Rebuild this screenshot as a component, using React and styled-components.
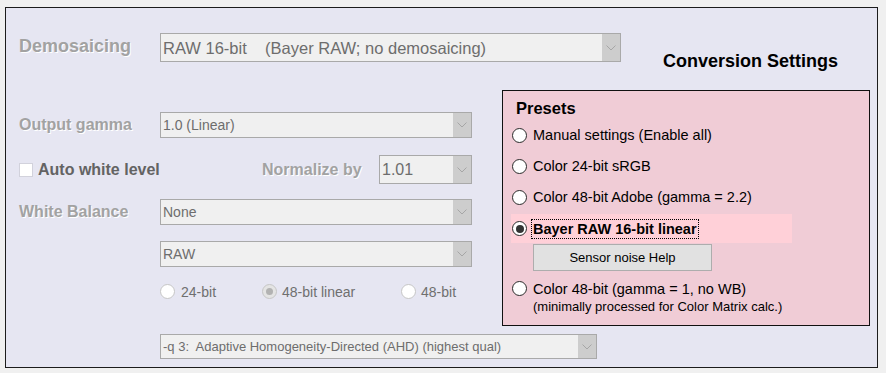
import React from "react";
import styled, { createGlobalStyle } from "styled-components";

const Global = createGlobalStyle`
  html, body { margin: 0; padding: 0; background: #f0f0f0; }
  body { font-family: "Liberation Sans", Arial, sans-serif; }
  #root { display: block; }
`;

const Frame = styled.div`
  box-sizing: border-box;
  margin: 7px 0 0 5px;
  width: 873px;
  height: 361px;
  border: 1px solid #1c1c1c;
  background: #e6e6f2;
  padding: 25px 0 0 13px;
  display: flex;
  flex-direction: column;
`;

const TopRow = styled.div`
  display: flex;
  align-items: flex-start;
  height: 39px;
`;

const FieldLabel = styled.div`
  flex: 0 0 ${(p) => p.$width || 141}px;
  font-size: ${(p) => p.$size || 16}px;
  font-weight: bold;
  color: #a2a2a2;
  text-shadow: 1px 1px 0 #ffffff;
  white-space: nowrap;
  margin-top: ${(p) => p.$top || 0}px;
`;

const Title = styled.div`
  margin: 19.3px 0 0 42px;
  font-size: 18px;
  line-height: 19.5px;
  font-weight: bold;
  color: #000;
  white-space: nowrap;
`;

const SelectBox = styled.div`
  box-sizing: border-box;
  display: flex;
  width: ${(p) => p.$width}px;
  height: ${(p) => p.$height}px;
  border: 1px solid #a9a9a9;
  background: #f0f0f0;
  flex: 0 0 auto;
`;

const SelectText = styled.div`
  flex: 1;
  display: flex;
  align-items: center;
  padding: ${(p) => p.$nudge || 0}px 0 0 2px;
  font-size: ${(p) => p.$size}px;
  color: #6d6d6d;
  white-space: pre;
  overflow: hidden;
`;

const SelectArrow = styled.div`
  flex: 0 0 18px;
  background: #cdcdcd;
  display: flex;
  align-items: center;
  justify-content: center;
`;

const Select = ({ width, height, size, nudge, children }) => (
  <SelectBox $width={width} $height={height}>
    <SelectText $size={size} $nudge={nudge}>{children}</SelectText>
    <SelectArrow>
      <svg width="10" height="6" viewBox="0 0 10 6">
        <polyline points="0.5,0.5 5,5 9.5,0.5" fill="none" stroke="#a6a6a6" strokeWidth="1" />
      </svg>
    </SelectArrow>
  </SelectBox>
);

const Middle = styled.div`
  display: flex;
  align-items: flex-start;
  margin-top: 18px;
`;

const LeftCol = styled.div`
  width: 453px;
  padding-top: 22px;
  display: flex;
  flex-direction: column;
`;

const FormRow = styled.div`
  display: flex;
  align-items: center;
  height: ${(p) => p.$height}px;
  margin-top: ${(p) => p.$top || 0}px;
  padding-left: ${(p) => p.$indent || 0}px;
`;

const CheckBox = styled.span`
  box-sizing: border-box;
  width: 14px;
  height: 14px;
  background: #fff;
  border: 1px solid #d2d2dc;
  margin-right: 5px;
`;

const CheckLabel = styled.span`
  font-size: 16px;
  font-weight: bold;
  color: #636363;
`;

const Spacer = styled.div`
  flex: 1;
`;

const RadioGroup = styled.div`
  display: grid;
  grid-template-columns: 102px 139px auto;
  align-items: center;
`;

const Option = styled.label`
  display: flex;
  align-items: center;
  gap: ${(p) => p.$gap || 5}px;
  font-size: 14px;
  color: #6f6f6f;
  white-space: nowrap;
`;

const DimRadio = styled.span`
  box-sizing: border-box;
  width: 15px;
  height: 15px;
  border-radius: 50%;
  border: 1px solid #c6c6c6;
  background: ${(p) => (p.$checked ? "#e4e4e4" : "#ffffff")};
  display: flex;
  align-items: center;
  justify-content: center;
  &::after {
    content: "";
    display: ${(p) => (p.$checked ? "block" : "none")};
    width: 7px;
    height: 7px;
    border-radius: 50%;
    background: #b2b2b2;
  }
`;

const Presets = styled.div`
  box-sizing: border-box;
  margin-left: 30px;
  width: 368px;
  height: 236px;
  border: 1px solid #111;
  background: #f0ccd6;
  padding: 8px 0 0 8px;
  display: flex;
  flex-direction: column;
  align-items: flex-start;
`;

const PresetsTitle = styled.div`
  margin-left: 5px;
  font-size: 16.5px;
  line-height: 19px;
  font-weight: bold;
  color: #000;
`;

const PresetRow = styled.label`
  display: flex;
  align-items: center;
  gap: 6px;
  box-sizing: border-box;
  height: ${(p) => p.$height || 31}px;
  margin-top: ${(p) => p.$top || 0}px;
  width: ${(p) => (p.$active ? "281px" : "auto")};
  background: ${(p) => (p.$active ? "#ffd0d8" : "transparent")};
  padding-left: 1px;
  font-size: 14.5px;
  color: #000;
  white-space: nowrap;
`;

const PresetRadio = styled.span`
  box-sizing: border-box;
  width: 15px;
  height: 15px;
  border-radius: 50%;
  border: 1px solid #2a2a2a;
  background: #fff;
  display: flex;
  align-items: center;
  justify-content: center;
  flex: 0 0 auto;
  &::after {
    content: "";
    display: ${(p) => (p.$checked ? "block" : "none")};
    width: 8px;
    height: 8px;
    border-radius: 50%;
    background: #333;
  }
`;

const FocusText = styled.span`
  font-weight: bold;
  outline: 1px dotted #000;
  outline-offset: 0;
  padding: 1px 1px 1px 1px;
  margin-left: -1px;
`;

const HelpButton = styled.button`
  box-sizing: border-box;
  margin: 1px 0 0 22px;
  width: 179px;
  height: 27px;
  border: 1px solid #adadad;
  background: #e1e1e1;
  font-family: inherit;
  font-size: 13px;
  color: #000;
  padding: 0;
`;

const Note = styled.div`
  margin-left: 22px;
  font-size: 13px;
  line-height: 15px;
  color: #000;
  white-space: nowrap;
`;

const BottomRow = styled.div`
  margin: 8px 0 0 141px;
`;

export default function App() {
  return (
    <>
      <Global />
      <Frame>
        <TopRow>
          <FieldLabel $size={18} $top={3}>Demosaicing</FieldLabel>
          <Select width={461} height={29} size={16.5} nudge={1}>
            {"RAW 16-bit    (Bayer RAW; no demosaicing)"}
          </Select>
          <Title>Conversion Settings</Title>
        </TopRow>

        <Middle>
          <LeftCol>
            <FormRow $height={26}>
              <FieldLabel>Output gamma</FieldLabel>
              <Select width={312} height={26} size={14}>1.0 (Linear)</Select>
            </FormRow>

            <FormRow $height={29} $top={17}>
              <CheckBox />
              <CheckLabel>Auto white level</CheckLabel>
              <Spacer />
              <FieldLabel $width={117}>Normalize by</FieldLabel>
              <Select width={93} height={29} size={16} nudge={1}>1.01</Select>
            </FormRow>

            <FormRow $height={26} $top={15}>
              <FieldLabel>White Balance</FieldLabel>
              <Select width={312} height={26} size={14}>None</Select>
            </FormRow>

            <FormRow $height={26} $top={16} $indent={141}>
              <Select width={312} height={26} size={14}>RAW</Select>
            </FormRow>

            <FormRow $height={20} $top={14.5} $indent={141}>
              <RadioGroup>
                <Option $gap={6}><DimRadio />24-bit</Option>
                <Option><DimRadio $checked />48-bit linear</Option>
                <Option><DimRadio />48-bit</Option>
              </RadioGroup>
            </FormRow>
          </LeftCol>

          <Presets>
            <PresetsTitle>Presets</PresetsTitle>
            <PresetRow $top={1.5}><PresetRadio />Manual settings (Enable all)</PresetRow>
            <PresetRow><PresetRadio />Color 24-bit sRGB</PresetRow>
            <PresetRow><PresetRadio />Color 48-bit Adobe (gamma = 2.2)</PresetRow>
            <PresetRow $active $height={29} $top={1.5}>
              <PresetRadio $checked />
              <FocusText>Bayer RAW 16-bit linear</FocusText>
            </PresetRow>
            <HelpButton type="button">Sensor noise Help</HelpButton>
            <PresetRow $height={21} $top={7}><PresetRadio />Color 48-bit (gamma = 1, no WB)</PresetRow>
            <Note>(minimally processed for Color Matrix calc.)</Note>
          </Presets>
        </Middle>

        <BottomRow>
          <Select width={437} height={25} size={13}>
            {"-q 3:  Adaptive Homogeneity-Directed (AHD) (highest qual)"}
          </Select>
        </BottomRow>
      </Frame>
    </>
  );
}
